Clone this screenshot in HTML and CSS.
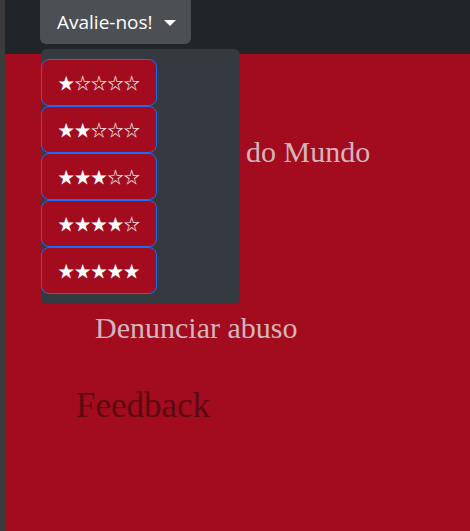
FILE: index.html
```html
<!DOCTYPE html>
<html lang="pt">
<head>
<meta charset="utf-8">
<title>Avalie-nos</title>
<link rel="stylesheet" href="styles.css">
</head>
<body>
<div class="frame">
  <header class="topbar">
    <div class="dropdown">
      <button class="rate-btn" type="button">Avalie-nos!<span class="caret"></span></button>
      <ul class="menu">
        <li><a class="item" href="#">★☆☆☆☆</a></li>
        <li><a class="item" href="#">★★☆☆☆</a></li>
        <li><a class="item" href="#">★★★☆☆</a></li>
        <li><a class="item" href="#">★★★★☆</a></li>
        <li><a class="item" href="#">★★★★★</a></li>
      </ul>
    </div>
  </header>
  <main class="content">
    <p class="title">do Mundo</p>
    <p class="link">Denunciar abuso</p>
    <p class="feedback">Feedback</p>
  </main>
</div>
</body>
</html>
```
FILE: styles.css
```css
html, body {
  margin: 0;
  padding: 0;
}
body {
  background: #a20c1e;
  font-family: "Liberation Serif", serif;
  overflow: hidden;
}
.frame {
  border-left: 5px solid #3b3b3b;
  min-height: 531px;
  box-sizing: border-box;
}
.topbar {
  height: 54px;
  background: #212529;
  padding-left: 35px;
}
.dropdown {
  position: relative;
  width: 151px;
}
.rate-btn {
  display: flex;
  align-items: center;
  height: 44px;
  width: 151px;
  padding: 0 0 0 17px;
  border: none;
  border-radius: 0 0 6px 6px;
  background: #4c5054;
  color: #fff;
  font-family: "Open Sans", sans-serif;
  font-size: 19px;
  cursor: pointer;
}
.caret {
  display: inline-block;
  margin-left: 11px;
  margin-top: 1px;
  border-top: 6px solid #fff;
  border-left: 6px solid transparent;
  border-right: 6px solid transparent;
}
.menu {
  position: absolute;
  top: 49px;
  left: 1px;
  width: 199px;
  height: 255px;
  box-sizing: border-box;
  margin: 0;
  padding: 10px 0;
  list-style: none;
  background: #343a40;
  border-radius: 6px;
  display: flex;
  flex-direction: column;
  align-items: flex-start;
}
.item {
  display: flex;
  align-items: center;
  height: 47px;
  box-sizing: border-box;
  padding: 0 16px;
  border: 1px solid #1a6df5;
  border-radius: 8px;
  background: #a20c1e;
  color: #fff;
  text-decoration: none;
  font-family: "Noto Sans CJK JP", "DejaVu Sans", sans-serif;
  font-size: 16.4px;
  line-height: 1;
}
.content {
  display: flex;
  flex-direction: column;
  align-items: flex-start;
}
.content p {
  margin: 0;
}
.title {
  margin-top: 81px !important;
  padding-left: 241px;
  font-size: 30px;
  line-height: 34px;
  color: #d5b5bc;
}
.link {
  margin-top: 142px !important;
  padding-left: 90px;
  font-size: 30px;
  line-height: 34px;
  color: #d5b5bc;
}
.feedback {
  margin-top: 41px !important;
  padding-left: 71px;
  font-size: 35px;
  line-height: 40px;
  color: #5c0a12;
}
```
